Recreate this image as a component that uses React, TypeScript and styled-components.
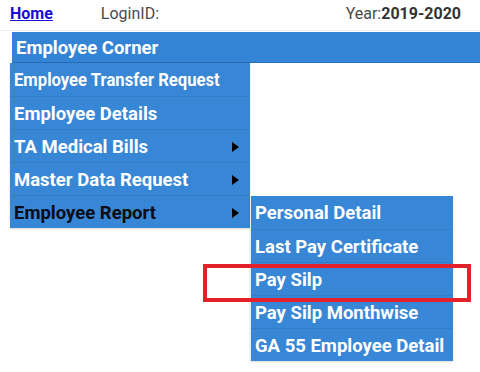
import React from "react";
import styled, { createGlobalStyle } from "styled-components";

const GlobalStyle = createGlobalStyle`
  body {
    margin: 0;
    background: #ffffff;
    font-family: Roboto, "Liberation Sans", sans-serif;
  }
`;

const mainItems: Array<{ label: string; sub?: boolean; active?: boolean; tight?: boolean }> = [
  { label: "Employee Transfer Request", tight: true },
  { label: "Employee Details" },
  { label: "TA Medical Bills", sub: true },
  { label: "Master Data Request", sub: true },
  { label: "Employee Report", sub: true, active: true },
];

const reportItems = [
  "Personal Detail",
  "Last Pay Certificate",
  "Pay Silp",
  "Pay Silp Monthwise",
  "GA 55 Employee Detail",
];

const App: React.FC = () => {
  return (
    <Page>
      <GlobalStyle />
      <Header>
        <HomeLink href="#">Home</HomeLink>
        <Login>LoginID:</Login>
        <Year>
          Year:<strong>2019-2020</strong>
        </Year>
      </Header>
      <NavBar>
        <NavTitle>Employee Corner</NavTitle>
        <Dropdown>
          {mainItems.map((item) => (
            <MenuItem key={item.label} $active={item.active}>
              <Label $tight={item.tight}>{item.label}</Label>
              {item.sub && <Arrow />}
              {item.active && (
                <SubMenu>
                  {reportItems.map((r) => (
                    <SubItem key={r}>{r}</SubItem>
                  ))}
                </SubMenu>
              )}
            </MenuItem>
          ))}
        </Dropdown>
      </NavBar>
      <Highlight />
    </Page>
  );
};

const Page = styled.div`
  position: relative;
  width: 480px;
  height: 372px;
  overflow: hidden;
`;

const Header = styled.div`
  height: 31px;
  display: flex;
  align-items: center;
  padding: 0 19px 4px 10px;
  font-size: 16px;
  box-sizing: border-box;
  border-bottom: 1px solid #ececec;
`;

const HomeLink = styled.a`
  color: #1a0dd0;
  font-weight: 700;
  text-decoration: underline;
`;

const Login = styled.span`
  margin-left: 48px;
  color: #4a4a4a;
`;

const Year = styled.span`
  margin-left: auto;
  color: #4a4a4a;

  strong {
    color: #333333;
    font-weight: 700;
  }
`;

const NavBar = styled.div`
  position: relative;
  margin: 1px 0 0 12px;
  height: 31px;
  background: #3484d5;
  border-bottom: 1px solid #2a6cb5;
  display: flex;
  align-items: center;
  padding: 1px 0 0 4px;
  box-sizing: border-box;
`;

const NavTitle = styled.span`
  color: #ffffff;
  font-size: 18.5px;
  font-weight: 700;
`;

const Dropdown = styled.ul`
  position: absolute;
  top: 31px;
  left: -2px;
  width: 240px;
  margin: 0;
  padding: 0;
  list-style: none;
  background: #3886d6;
  box-shadow: 0 1px 2px rgba(0, 0, 0, 0.15);
`;

const MenuItem = styled.li<{ $active?: boolean }>`
  position: relative;
  height: 33px;
  display: flex;
  align-items: center;
  justify-content: space-between;
  padding: 1px 11px 0 4px;
  box-sizing: border-box;
  color: ${(p) => (p.$active ? "#0c0c14" : "#ffffff")};
  font-size: 18.5px;
  font-weight: 700;
  white-space: nowrap;
  border-top: 1px solid rgba(0, 0, 0, 0.07);

  &:first-child {
    border-top: none;
  }
`;

const Label = styled.span<{ $tight?: boolean }>`
  display: inline-block;
  transform-origin: left center;
  transform: ${(p) => (p.$tight ? "scaleX(0.9)" : "none")};
`;

const Arrow = styled.span`
  width: 0;
  height: 0;
  border-top: 5.5px solid transparent;
  border-bottom: 5.5px solid transparent;
  border-left: 7px solid #000000;
`;

const SubMenu = styled.ul`
  position: absolute;
  top: 0;
  left: 240px;
  width: 202px;
  margin: 0;
  padding: 0;
  list-style: none;
  background: #3886d6;
  border-left: 1px solid #e6eef8;
  box-shadow: 0 1px 2px rgba(0, 0, 0, 0.15);
`;

const SubItem = styled.li`
  height: 33px;
  display: flex;
  align-items: center;
  padding: 1px 0 0 4px;
  box-sizing: border-box;
  color: #ffffff;
  font-size: 18.5px;
  font-weight: 700;
  white-space: nowrap;
  border-top: 1px solid rgba(0, 0, 0, 0.07);

  &:first-child {
    border-top: none;
  }
`;

const Highlight = styled.div`
  position: absolute;
  left: 203px;
  top: 264px;
  width: 268px;
  height: 38px;
  box-sizing: border-box;
  border: 4px solid #e4202b;
`;

export default App;
